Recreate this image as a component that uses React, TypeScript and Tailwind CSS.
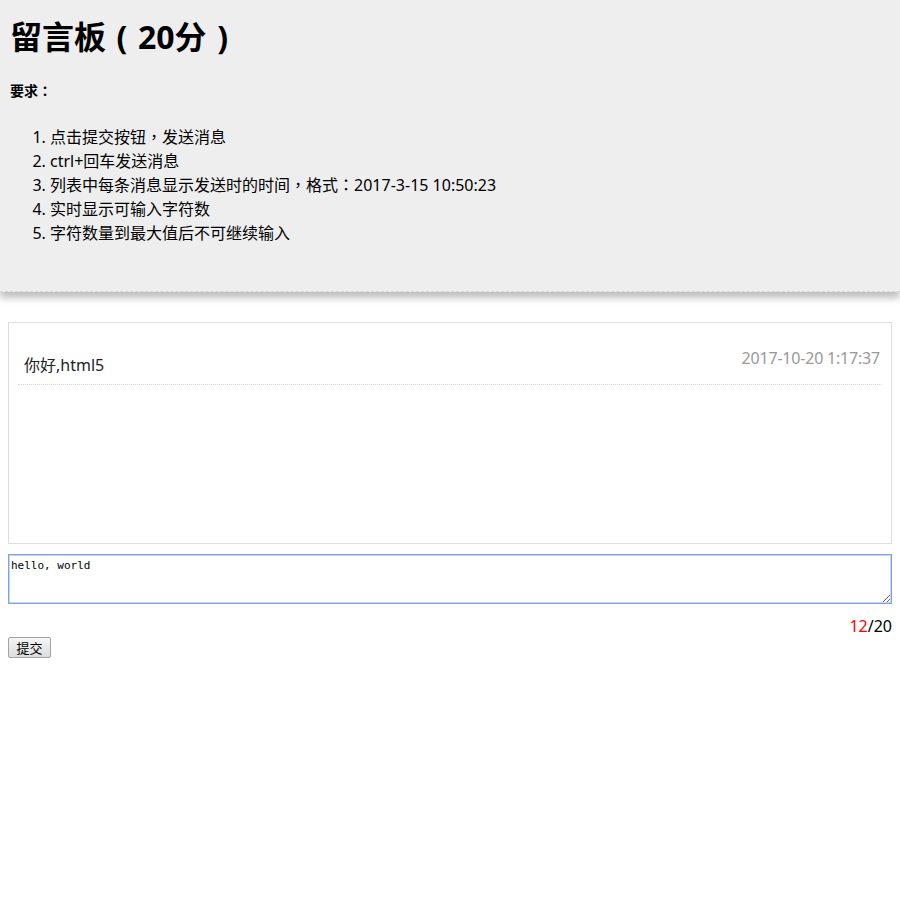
import { useState } from "react";

const MAX = 20;

// 全角标点用繁体字形，居中显示
const P = ({ c }: { c: string }) => (
  <span className="leading-none font-['Noto_Sans_CJK_TC',sans-serif]">{c}</span>
);

export default function App() {
  const [text, setText] = useState("hello, world");
  const [messages, setMessages] = useState([
    { content: "你好,html5", time: "2017-10-20 1:17:37" },
  ]);

  const fmt = (d: Date) =>
    `${d.getFullYear()}-${d.getMonth() + 1}-${d.getDate()} ${d.getHours()}:${String(
      d.getMinutes(),
    ).padStart(2, "0")}:${String(d.getSeconds()).padStart(2, "0")}`;

  // 提交消息
  const send = () => {
    if (!text.trim()) return;
    setMessages([...messages, { content: text, time: fmt(new Date()) }]);
    setText("");
  };

  return (
    <div className="min-h-[900px] bg-white text-black font-['Noto_Sans','Noto_Sans_CJK_SC',sans-serif]">
      <div className="bg-[#eeeeee] px-[10px] pt-[17px] pb-[46px] border-b border-dashed border-[#d6d6d6] shadow-[0_6px_7px_rgba(0,0,0,0.25)]">
        <h1 className="text-[32px] leading-[40px] font-bold">
          留言板<span className="inline-block w-[32px] text-center">(</span>20分
          <span className="inline-block w-[32px] text-center">)</span>
        </h1>
        <p className="mt-[24px] text-[14px] leading-[20px] font-bold">
          要求<P c="：" />
        </p>
        <ol className="mt-[24px] list-decimal pl-[40px] text-[16px] leading-[24px]">
          <li>
            点击提交按钮<P c="，" />发送消息
          </li>
          <li>ctrl+回车发送消息</li>
          <li>
            列表中每条消息显示发送时的时间<P c="，" />格式<P c="：" />2017-3-15 10:50:23
          </li>
          <li>实时显示可输入字符数</li>
          <li>字符数量到最大值后不可继续输入</li>
        </ol>
      </div>

      <div className="px-[8px]">
        <div className="mt-[30px] h-[222px] border border-[#dddddd] px-[9px] pt-[9px] overflow-auto">
          {messages.map((m, i) => (
            <div
              key={i}
              className="flex justify-between items-start border-b border-dotted border-[#d8d8d8] pl-[6px] pr-[2px] h-[53px]"
            >
              <span className="mt-[21px] text-[16px] leading-[24px] text-[#222]">{m.content}</span>
              <span className="mt-[14px] text-[16px] leading-[24px] tracking-[-0.2px] text-[#999999]">
                {m.time}
              </span>
            </div>
          ))}
        </div>

        <textarea
          value={text}
          maxLength={MAX}
          onChange={(e) => setText(e.target.value.slice(0, MAX))}
          onKeyDown={(e) => {
            if (e.ctrlKey && e.key === "Enter") send();
          }}
          className="block w-full mt-[10px] h-[50px] border border-[#7ea2e3] shadow-[0_0_0_1px_#c2d5f5_inset] outline-none px-[2px] pt-[4px] pb-[2px] text-[11px] leading-[14px] text-black font-['DejaVu_Sans_Mono','Noto_Sans_CJK_SC',monospace] resize-y"
        />

        <div className="mt-[11px] text-right text-[16px] leading-[22px]">
          <span className="text-[#ff0000]">{text.length}</span>/{MAX}
        </div>

        <button
          onClick={send}
          className="block h-[21px] w-[43px] border border-[#a3a3a3] rounded-[2px] bg-gradient-to-b from-[#f6f6f6] to-[#dddddd] text-[13px] leading-[17px] font-['Noto_Sans_CJK_SC',sans-serif]"
        >
          提交
        </button>
      </div>
    </div>
  );
}
